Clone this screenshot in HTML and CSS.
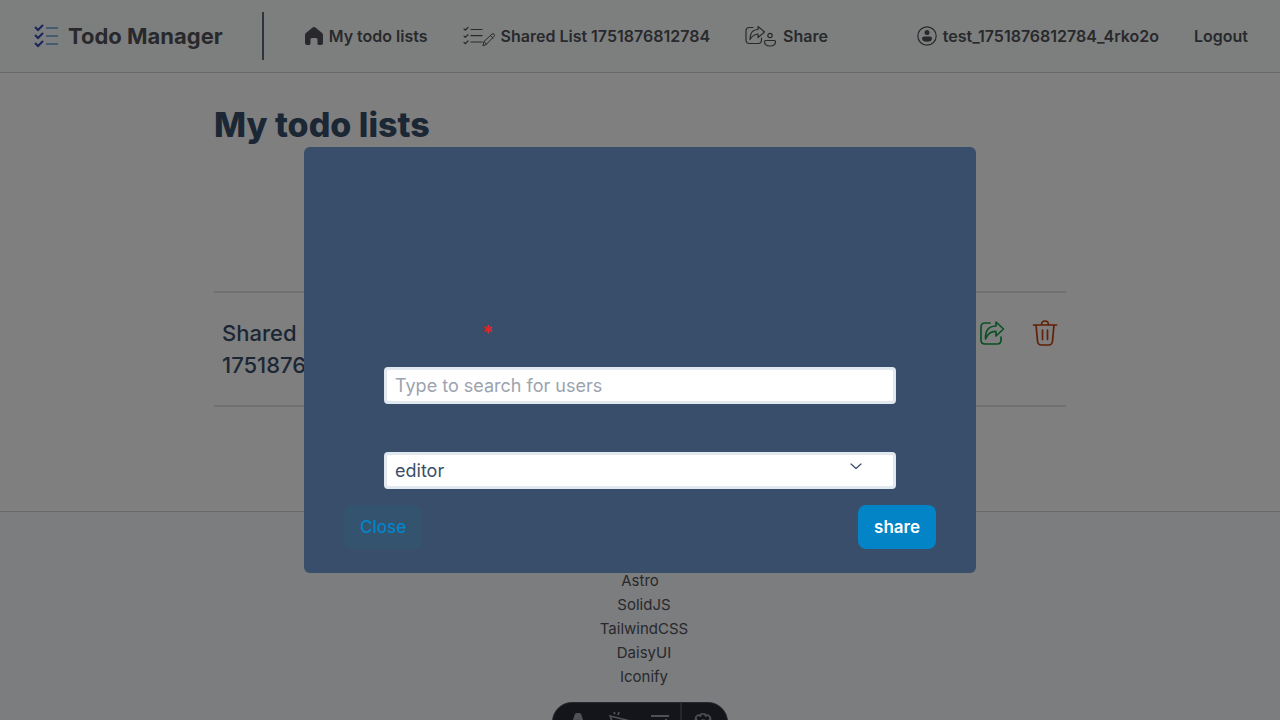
FILE: index.html
```html
<!DOCTYPE html>
<html lang="en">
<head>
<meta charset="utf-8">
<meta name="viewport" content="width=device-width, initial-scale=1">
<title>Todo Manager</title>
<link rel="stylesheet" href="styles.css">
</head>
<body>
<header class="header">
  <a class="brand" href="#">
    <svg class="brand-icon" viewBox="0 0 26 26" fill="none" stroke-width="2"><path stroke="#3346b8" d="M2 4l3 3 5-5M2 12l3 3 5-5M2 20l3 3 5-5"/><path stroke="#85b9e4" stroke-width="2.200" d="M13 5h12M13 13h12M13 21h12"/></svg>
    <span>Todo Manager</span>
  </a>
  <nav class="nav">
    <a class="nav-link" href="#">
      <svg class="icon-home" viewBox="0 0 18 20" fill="currentColor"><path d="M7.600 1.500Q9 .4 10.400 1.500L16.800 6.800Q18 7.800 18 9v8q0 2-2 2h-2q-1.500 0-1.500-1.500v-4Q12.500 12 11 12H7q-1.500 0-1.500 1.500v4Q5.500 19 4 19H2q-2 0-2-2V9q0-1.200 1.200-2.200z"/></svg>
      <span>My todo lists</span>
    </a>
    <a class="nav-link" href="#">
      <svg class="icon-wide" viewBox="0 0 32 22" fill="none" stroke="currentColor" stroke-linecap="round" stroke-linejoin="round"><path stroke-width="1.200" d="M1 4l1.200 1.200L5 2.500M1 11.200l1.200 1.200L5 9.700M1 17.500l1.200 1.200L5 16M8 4.500h11M8 10.700h11M8 17h11"/><path d="M20 20.500l1-4 8-7.500q1-.8 2 .2t.2 2l-7.700 8zM21 16.500l2.500 2.700M27.500 10.500l2.500 2.700"/></svg>
      <span>Shared List 1751876812784</span>
    </a>
    <a class="nav-link" href="#">
      <svg class="icon-wide" viewBox="0 0 32 22" fill="none" stroke="currentColor" stroke-width="1.200" stroke-linecap="round" stroke-linejoin="round"><path d="M8 2.500H4.500Q1 2.500 1 6v9q0 3.500 3.500 3.500H13q3.500 0 3.500-3.500v-2"/><path d="M5 14.500q0-10 8-10V1.500l6.500 5.500-6.500 5.500V9Q8 9.500 5 14.500z"/><circle cx="25" cy="10.500" r="2.200"/><path d="M20.500 15.500h9q1 0 1 1 0 4.500-5.500 4.500t-5.500-4.500q0-1 1-1z"/></svg>
      <span>Share</span>
    </a>
  </nav>
  <div class="account">
    <a class="nav-link" href="#">
      <svg class="icon-user" viewBox="0 0 20 20"><circle cx="10" cy="10" r="9.200" fill="none" stroke="currentColor" stroke-width="1.200"/><circle cx="10" cy="6.500" r="2.500" fill="currentColor"/><path fill="currentColor" d="M7 10.500h6q2 0 2 1.700 0 3.600-5 3.600t-5-3.600q0-1.700 2-1.700z"/></svg>
      <span>test_1751876812784_4rko2o</span>
    </a>
    <button class="logout" type="button">Logout</button>
  </div>
</header>

<main class="main">
  <h1 class="title">My todo lists</h1>
  <ul class="lists">
    <li class="list-row">
      <a class="list-name" href="#">Shared List 1751876812784</a>
      <div class="row-actions">
        <button class="icon-button share-icon" type="button" aria-label="Share list"><svg viewBox="0 0 26 26" fill="none" stroke="currentColor" stroke-width="1.700" stroke-linecap="round" stroke-linejoin="round"><path d="M11 3H6Q2 3 2 7v13q0 4 4 4h12q4 0 4-4v-3"/><path d="M6.500 19Q6 6 17 6V2l7.500 7-7.500 7v-4.500Q10 11 6.500 19z"/></svg></button>
        <button class="icon-button delete-icon" type="button" aria-label="Delete list"><svg viewBox="0 0 26 26" fill="none" stroke="currentColor" stroke-width="1.700" stroke-linecap="round" stroke-linejoin="round"><path d="M1.500 5h23M9.500 5q0-4 3.500-4t3.500 4M4 5l1.500 16q.4 4 4 4h7q3.600 0 4-4L22 5M10.500 10v9.500M15.500 10v9.500"/></svg></button>
      </div>
    </li>
  </ul>
</main>

<footer class="footer">
  <a class="footer-lead" href="#">Astro</a>
  <ul class="footer-links">
    <li><a href="#">SolidJS</a></li>
    <li><a href="#">TailwindCSS</a></li>
    <li><a href="#">DaisyUI</a></li>
    <li><a href="#">Iconify</a></li>
  </ul>
</footer>

<div class="toolbar">
  <button class="tool" type="button" aria-label="Menu"><svg viewBox="0 0 20 20"><path fill="currentColor" d="M6.500 3Q7 1 9 1h2q2 0 2.500 2L18 18l-5-2-3-9-3 9-5 2z"/></svg></button>
  <button class="tool" type="button" aria-label="Inspect"><svg viewBox="0 0 20 20" fill="none" stroke="currentColor" stroke-width="1.700"><path d="M1 4l16 4-7 3-3 7zM5 0l1 2M10 0l-1 3"/></svg></button>
  <button class="tool" type="button" aria-label="Audit"><svg viewBox="0 0 20 20" fill="none" stroke="currentColor" stroke-width="2"><path d="M1 4h18M1 10h9M13 11l3-3 3 3"/></svg></button>
  <button class="tool tool-last" type="button" aria-label="Settings"><svg viewBox="0 0 20 20" fill="none" stroke="currentColor" stroke-width="1.700" stroke-linejoin="round"><path d="M8 2h4l.6 2 2.400-1 2.500 2.500-1 2.400L19 8.500v3.500l-2.500.6 1 2.400-2.500 2.500-2.400-1L12 19H8l-.6-2.500-2.400 1L2.500 15l1-2.400L1 12V8.500l2.500-.6-1-2.400L5 3l2.400 1z"/><circle cx="10" cy="11" r="3"/></svg></button>
</div>

<div class="backdrop">
  <form class="modal" role="dialog" aria-label="Share list">
    <div class="fields">
      <label class="field-label" for="user">*</label>
      <input class="control" id="user" type="text" placeholder="Type to search for users">
      <div class="select-wrap">
        <select class="control" id="role" aria-label="Role"><option>editor</option></select>
        <svg class="chevron" viewBox="0 0 12 8" fill="none" stroke="currentColor" stroke-width="1.200" stroke-linecap="round" stroke-linejoin="round"><path d="M1 2l5 4.500L11 2"/></svg>
      </div>
    </div>
    <div class="modal-actions">
      <button class="button button-soft" type="button">Close</button>
      <button class="button button-primary" type="button">share</button>
    </div>
  </form>
</div>
</body>
</html>
```
FILE: styles.css
```css
* { box-sizing: border-box; }
body {
  margin: 0;
  font: 16px/24px Inter, "Liberation Sans", sans-serif;
  color: #52525b;
  background: #fff;
}
a { color: inherit; text-decoration: none; }
button { font: inherit; color: inherit; border: 0; padding: 0; background: none; }
ul { list-style: none; margin: 0; padding: 0; }
svg { display: block; flex: none; }

.header {
  display: flex;
  align-items: center;
  padding: 12px 32px;
  border-bottom: 1px solid #cfd3d3;
  background: #fafffd;
  font-weight: 600;
  white-space: nowrap;
}
.brand {
  display: flex;
  align-items: center;
  gap: 8px;
  height: 48px;
  padding-right: 39px;
  border-right: 2px solid #5d6b74;
  font-size: 22px;
  line-height: 32px;
  font-weight: 700;
}
.brand-icon { width: 28px; height: 26px; }
.nav { display: flex; gap: 35px; padding-left: 41px; }
.nav-link { display: flex; align-items: center; gap: 6px; }
.icon-home { width: 18px; height: 20px; }
.icon-wide { width: 32px; height: 22px; }
.icon-user { width: 20px; height: 20px; }
.account { display: flex; gap: 35px; margin-left: auto; }
.logout { font-weight: 600; }

.main { max-width: 852px; margin: 0 auto; padding: 32px 0 104px; color: #394e6a; }
.title { margin: 0 0 146px; font-size: 34px; line-height: 40px; font-weight: 800; }
.list-row {
  display: flex;
  justify-content: space-between;
  align-items: flex-start;
  padding: 24px 8px;
  border: solid #e2e2e4;
  border-width: 2px 0;
}
.list-name { max-width: 192px; font-size: 22px; line-height: 32px; font-weight: 500; }
.row-actions { display: flex; gap: 27px; padding-top: 3px; }
.icon-button { width: 26px; height: 26px; }
.share-icon { color: #15a34a; }
.delete-icon { color: #c2410c; }

.footer {
  padding: 57px 0 31px;
  border-top: 1px solid #cdd0d4;
  background: #f8fafd;
  font-size: 15px;
  text-align: center;
}
.footer-lead { display: block; }
.footer-links { padding-left: 8px; }

.toolbar {
  position: fixed;
  bottom: -22px;
  left: 50%;
  display: flex;
  width: 176px;
  height: 40px;
  margin-left: -88px;
  border: 1px solid #4b505a;
  border-radius: 20px;
  background: #262a34;
  color: #a0a2a8;
  overflow: hidden;
}
.tool { flex: 1; display: flex; justify-content: center; padding-top: 9px; }
.tool svg { width: 20px; height: 20px; }
.tool:first-child { padding-left: 4px; }
.tool-last { padding-right: 4px; border-left: 2px solid #4b4f59; }

.backdrop {
  position: fixed;
  inset: 0;
  display: grid;
  place-items: center;
  background: rgba(0, 0, 0, .5);
}
.modal {
  width: calc(100% - 32px);
  max-width: 672px;
  padding: 172px 40px 24px;
  border-radius: 6px;
  background: #394e6a;
}
.fields { padding: 0 40px; }
.field-label { display: block; height: 48px; padding-left: 98px; font-size: 20px; line-height: 28px; font-weight: 800; color: #dc2626; }
.control {
  display: block;
  width: 100%;
  height: 37px;
  padding: 0 8px;
  border: 3px solid #e2e8f0;
  border-radius: 4px;
  background: #fff;
  color: #394e6a;
  font: 18px/28px Inter, "Liberation Sans", sans-serif;
  appearance: none;
}
.control::placeholder { color: #9ca3af; opacity: 1; }
.select-wrap { position: relative; margin-top: 48px; color: #394e6a; }
.chevron { position: absolute; top: 10px; right: 34px; width: 12px; height: 8px; }
.modal-actions { display: flex; justify-content: space-between; margin-top: 16px; }
.button { height: 44px; padding: 0 16px; border-radius: 8px; font-size: 17px; line-height: 28px; font-weight: 500; }
.button-soft { background: #34536f; color: #0284c7; }
.button-primary { background: #0284c7; color: #fff; font-weight: 600; }
```
